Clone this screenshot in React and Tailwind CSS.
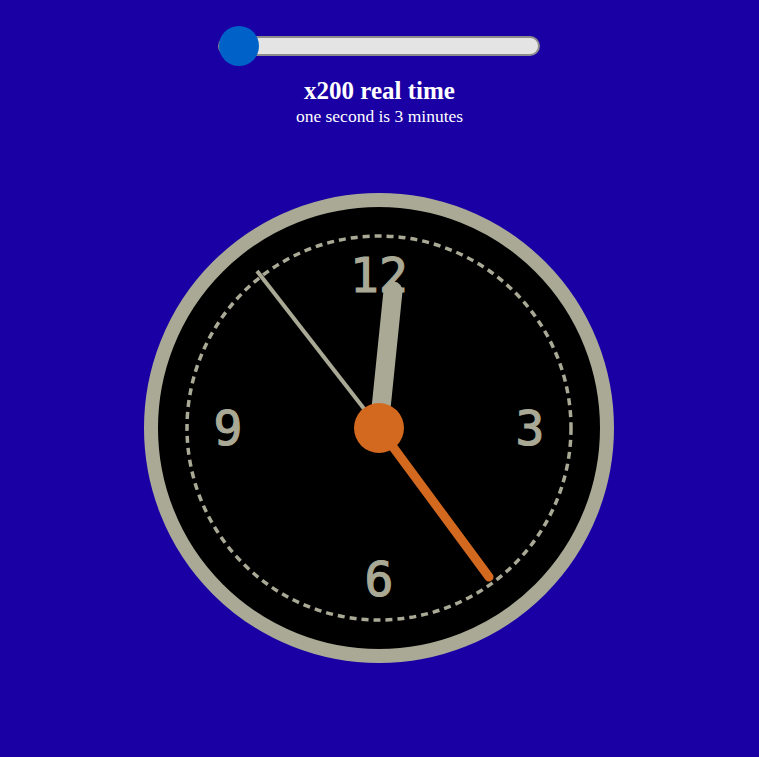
import React from "react";

const GRAY = "#a9a996";
const ORANGE = "#d2691e";

function Clock() {
  const hourEnd = [14, -137];
  const minEnd = [110, 149];
  const secEnd = [-122, -157];

  return (
    <svg width="480" height="480" viewBox="-240 -240 480 480">
      <circle r="228" fill="#000" stroke={GRAY} strokeWidth="14" />
      <circle r="192" fill="none" stroke={GRAY} strokeWidth="3.5" strokeDasharray="7 5" />
      <g
        fill={GRAY}
        stroke={GRAY}
        strokeWidth="1.2"
        fontFamily="'DejaVu Sans Mono', monospace"
        fontSize="48"
        textAnchor="middle"
      >
        <text x="0" y="-136">12</text>
        <text x="151" y="17">3</text>
        <text x="0" y="168">6</text>
        <text x="-151" y="17">9</text>
      </g>
      <line x1="0" y1="0" x2={secEnd[0]} y2={secEnd[1]} stroke={GRAY} strokeWidth="4" />
      <line x1="0" y1="0" x2={hourEnd[0]} y2={hourEnd[1]} stroke={GRAY} strokeWidth="19" strokeLinecap="round" />
      <line x1="0" y1="0" x2={minEnd[0]} y2={minEnd[1]} stroke={ORANGE} strokeWidth="9" strokeLinecap="round" />
      <circle r="25" fill={ORANGE} />
    </svg>
  );
}

export default function App() {
  return (
    <div className="min-h-[757px] w-full bg-[#1a00a4] flex flex-col items-center font-['Liberation_Serif',serif] text-white">
      {/* Slider */}
      <div className="relative mt-[36px] w-[322px] h-[20px] ml-[-2px]">
        <div className="h-full w-full rounded-full bg-[#e4e4e4] border-2 border-[#8c8c8c]" />
        <div className="absolute left-[1px] top-[-10px] w-[40px] h-[40px] rounded-full bg-[#0061c9]" />
      </div>

      {/* Labels */}
      <div className="mt-[20px] text-[25px] font-bold leading-[30px]">x200 real time</div>
      <div className="text-[17.5px] leading-[20px]">one second is 3 minutes</div>

      {/* Clock */}
      <div className="mt-[62px] ml-[-1px]">
        <Clock />
      </div>
    </div>
  );
}
